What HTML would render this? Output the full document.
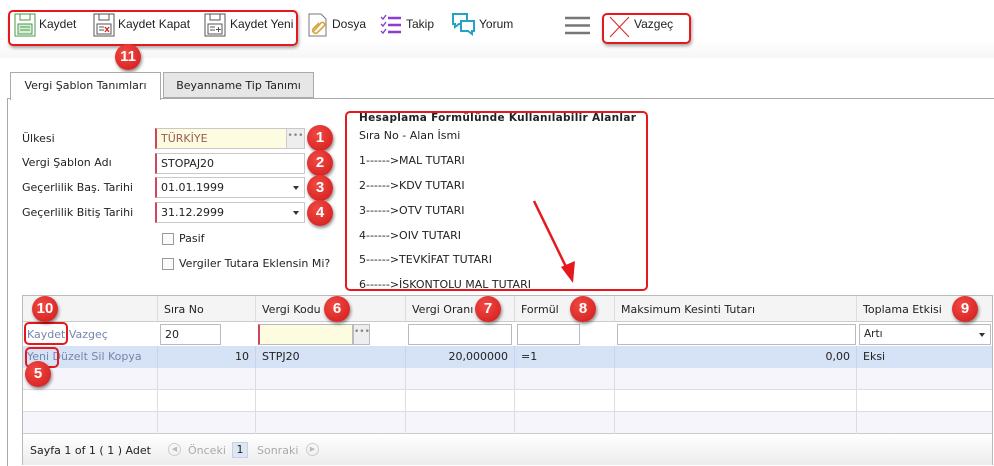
<!DOCTYPE html>
<html><head><meta charset="utf-8">
<style>
*{box-sizing:border-box;margin:0;padding:0}
body{width:994px;height:466px;overflow:hidden;background:#fff;position:relative;font-family:"DejaVu Sans","Liberation Sans",sans-serif;font-size:11px;color:#222}
.a{position:absolute}
.tb{font-family:"Liberation Sans",sans-serif;font-size:12px;color:#222;top:17px;white-space:nowrap}
.rb{position:absolute;border:2px solid #e5191d;border-radius:5px;box-shadow:1px 2px 3px rgba(0,0,0,.35)}
.bd{position:absolute;width:26px;height:26px;border-radius:50%;background:radial-gradient(circle at 40% 35%,#f04a43,#d1191a);color:#fff;font-family:"Liberation Sans",sans-serif;font-size:15px;font-weight:bold;text-align:center;line-height:26px;box-shadow:1px 2px 3px rgba(0,0,0,.45)}
.lbl{position:absolute;left:22px;font-size:11px}
.inp{position:absolute;left:155px;width:150px;height:21px;border:1px solid #c8c8c8;border-left:2px solid #d0455a;background:#fff;padding-left:4px;line-height:19px;font-size:11px}
.dd{position:absolute;right:5px;top:8px;border:3.5px solid transparent;border-top:4px solid #333}
.cb{position:absolute;left:162px;width:12px;height:12px;border:1px solid #999;background:#fafafa}
.fl{position:absolute;left:359px;font-size:11px;white-space:nowrap}
.g{position:absolute;left:22px;top:295px;width:971px;height:170px;border:1px solid #bbb}
.row{position:absolute;left:0;width:969px}
.c{position:absolute;top:0;bottom:0;border-right:1px solid #ddd}
.gi{position:absolute;height:21px;border:1px solid #bbb;background:#fff;padding-left:4px;line-height:19px}
.lk{color:#7585ac}
</style></head><body>
<div class="a" style="left:0;top:0;width:994px;height:58px;background:linear-gradient(#fff 70%,#f6f6f6)"></div>
<div class="rb" style="left:8px;top:10px;width:290px;height:36px"></div>
<svg class="a" style="left:14px;top:13px" width="22" height="24" viewBox="0 0 22 24"><rect x="1" y="1" width="20" height="22" fill="#fff" stroke="#4a9a4a"/><rect x="6" y="1" width="10" height="6" fill="#fff" stroke="#4a9a4a"/><rect x="4" y="11" width="14" height="10" fill="#d9efd9" stroke="#4a9a4a"/><path d="M6 14h10M6 17h10" stroke="#4a9a4a"/></svg>
<div class="a tb" style="left:39px">Kaydet</div>
<svg class="a" style="left:93px;top:13px" width="22" height="24" viewBox="0 0 22 24"><rect x="1" y="1" width="20" height="22" fill="#fff" stroke="#555"/><rect x="6" y="1" width="10" height="6" fill="#fff" stroke="#555"/><rect x="4" y="11" width="14" height="10" fill="#fff" stroke="#555"/><path d="M6 14h5M6 17h5" stroke="#555"/><path d="M12 14l4 5M16 14l-4 5" stroke="#d22" stroke-width="1.3"/></svg>
<div class="a tb" style="left:118px">Kaydet Kapat</div>
<svg class="a" style="left:204px;top:13px" width="22" height="24" viewBox="0 0 22 24"><rect x="1" y="1" width="20" height="22" fill="#fff" stroke="#555"/><rect x="6" y="1" width="10" height="6" fill="#fff" stroke="#555"/><rect x="4" y="11" width="14" height="10" fill="#fff" stroke="#555"/><path d="M6 14h5M6 17h5M12 16.5h5M14.5 14v5" stroke="#555"/></svg>
<div class="a tb" style="left:230px">Kaydet Yeni</div>
<svg class="a" style="left:308px;top:13px" width="20" height="24" viewBox="0 0 20 24"><path d="M1 1h12l5 5v17H1z" fill="#fff" stroke="#777"/><path d="M5 19l8-9a2 2 0 0 1 3 3l-7 7a3 3 0 0 1-4-4l6-6" fill="none" stroke="#d8a53a" stroke-width="1.6"/></svg>
<div class="a tb" style="left:332px">Dosya</div>
<svg class="a" style="left:380px;top:13px" width="22" height="22" viewBox="0 0 22 22"><path d="M1 4l2 2 3-4M1 11l2 2 3-4M1 18l2 2 3-4" stroke="#8a3fd1" stroke-width="1.4" fill="none"/><path d="M8 5h13M8 12h13M8 19h13" stroke="#8a3fd1" stroke-width="2.5"/></svg>
<div class="a tb" style="left:406px">Takip</div>
<svg class="a" style="left:451px;top:12px" width="25" height="24" viewBox="0 0 25 24"><path d="M2 2h14v10H8l-4 3v-3H2z" fill="#fff" stroke="#26a3c4" stroke-width="2"/><path d="M10 9h13v10h-2v3l-4-3h-7z" fill="#fff" stroke="#26a3c4" stroke-width="2"/></svg>
<div class="a tb" style="left:479px">Yorum</div>
<svg class="a" style="left:565px;top:16px" width="25" height="19"><path d="M0 2h25M0 9.5h25M0 17h25" stroke="#777" stroke-width="2.6"/></svg>
<div class="rb" style="left:602px;top:13px;width:89px;height:31px"></div>
<svg class="a" style="left:609px;top:16px" width="21" height="22"><path d="M1 1l19 20M20 1L1 21" stroke="#e23333" stroke-width="1.2"/></svg>
<div class="a tb" style="left:634px">Vazgeç</div>
<div class="bd" style="left:115px;top:44px">11</div>
<div class="a" style="left:7px;top:98px;width:987px;height:368px;border-left:1px solid #aaa;border-top:1px solid #aaa"></div>
<div class="a" style="left:10px;top:72px;width:151px;height:28px;background:#fff;border:1px solid #aaa;border-bottom:none;text-align:center;line-height:26px">Vergi Şablon Tanımları</div>
<div class="a" style="left:163px;top:72px;width:151px;height:26px;background:#e6e6e6;border:1px solid #aaa;text-align:center;line-height:25px">Beyanname Tip Tanımı</div>
<div class="lbl" style="top:132px">Ülkesi</div>
<div class="lbl" style="top:156px">Vergi Şablon Adı</div>
<div class="lbl" style="top:181px">Geçerlilik Baş. Tarihi</div>
<div class="lbl" style="top:206px">Geçerlilik Bitiş Tarihi</div>
<div class="inp" style="top:128px;background:#fdfbe0;color:#9a5a5a">TÜRKİYE<div class="a" style="right:0;top:0;width:18px;height:19px;background:#eee;border-left:1px solid #ccc;color:#888;font-size:9px;text-align:center;line-height:15px">•••</div></div>
<div class="inp" style="top:153px">STOPAJ20</div>
<div class="inp" style="top:177px">01.01.1999<div class="dd"></div></div>
<div class="inp" style="top:202px">31.12.2999<div class="dd"></div></div>
<div class="cb" style="top:233px"></div><div class="a" style="left:179px;top:232px">Pasif</div>
<div class="cb" style="top:258px"></div><div class="a" style="left:179px;top:257px">Vergiler Tutara Eklensin Mi?</div>
<div class="bd" style="left:307px;top:125px">1</div>
<div class="bd" style="left:307px;top:150px">2</div>
<div class="bd" style="left:307px;top:175px">3</div>
<div class="bd" style="left:307px;top:200px">4</div>
<div class="a" style="left:345px;top:111px;width:303px;height:180px;overflow:hidden">
<div class="fl" style="left:14px;top:1px;font-weight:bold;font-size:10.5px;letter-spacing:0.3px">Hesaplama Formülünde Kullanılabilir Alanlar</div>
<div class="fl" style="left:14px;top:18px">Sıra No - Alan İsmi</div>
<div class="fl" style="left:14px;top:43px">1------&gt;MAL TUTARI</div>
<div class="fl" style="left:14px;top:68px">2------&gt;KDV TUTARI</div>
<div class="fl" style="left:14px;top:93px">3------&gt;OTV TUTARI</div>
<div class="fl" style="left:14px;top:118px">4------&gt;OIV TUTARI</div>
<div class="fl" style="left:14px;top:142px">5------&gt;TEVKİFAT TUTARI</div>
<div class="fl" style="left:14px;top:167px">6------&gt;İSKONTOLU MAL TUTARI</div>
</div>
<div class="rb" style="left:345px;top:111px;width:303px;height:180px;box-shadow:none"></div>
<svg class="a" style="left:525px;top:195px" width="55" height="95"><path d="M9 6L44 78" stroke="#e5191d" stroke-width="2.5"/><path d="M36 72L48 88 50 66z" fill="#e5191d"/></svg>
<div class="g">
<div class="row" style="top:0;height:26px;background:#f4f4f4;border-bottom:1px solid #ccc">
<div class="c" style="left:0;width:135px"></div>
<div class="c" style="left:135px;width:98px"><span class="a" style="left:6px;top:7px">Sıra No</span></div>
<div class="c" style="left:233px;width:150px"><span class="a" style="left:6px;top:7px">Vergi Kodu</span></div>
<div class="c" style="left:383px;width:109px"><span class="a" style="left:6px;top:7px">Vergi Oranı</span></div>
<div class="c" style="left:492px;width:100px"><span class="a" style="left:6px;top:7px">Formül</span></div>
<div class="c" style="left:592px;width:242px"><span class="a" style="left:6px;top:7px">Maksimum Kesinti Tutarı</span></div>
<div class="c" style="left:834px;width:135px;border:none"><span class="a" style="left:6px;top:7px">Toplama Etkisi</span></div>
</div>
<div class="row" style="top:26px;height:24px;background:#fff">
<span class="a lk" style="left:4px;top:6px">Kaydet Vazgeç</span>
<div class="gi" style="left:137px;top:2px;width:61px">20</div>
<div class="gi" style="left:235px;top:2px;width:95px;background:#fdfbe0;border-left:2px solid #d0455a"></div>
<div class="gi" style="left:330px;top:2px;width:17px;background:#eee;color:#888;font-size:9px;text-align:center;padding:0;line-height:15px">•••</div>
<div class="gi" style="left:385px;top:2px;width:104px"></div>
<div class="gi" style="left:494px;top:2px;width:63px"></div>
<div class="gi" style="left:594px;top:2px;width:239px"></div>
<div class="gi" style="left:836px;top:2px;width:132px;font-size:10.5px">Artı<div class="dd"></div></div>
</div>
<div class="row" style="top:50px;height:22px;background:#d6e2f5">
<div class="c" style="left:0;width:135px;border-color:#c8d4e8"><span class="a lk" style="left:4px;top:4px">Yeni Düzelt Sil Kopya</span></div>
<div class="c" style="left:135px;width:98px;border-color:#c8d4e8"><span class="a" style="right:6px;top:4px">10</span></div>
<div class="c" style="left:233px;width:150px;border-color:#c8d4e8"><span class="a" style="left:6px;top:4px">STPJ20</span></div>
<div class="c" style="left:383px;width:109px;border-color:#c8d4e8"><span class="a" style="right:6px;top:4px">20,000000</span></div>
<div class="c" style="left:492px;width:100px;border-color:#c8d4e8"><span class="a" style="left:6px;top:4px">=1</span></div>
<div class="c" style="left:592px;width:242px;border-color:#c8d4e8"><span class="a" style="right:6px;top:4px">0,00</span></div>
<div class="c" style="left:834px;width:135px;border:none"><span class="a" style="left:6px;top:4px">Eksi</span></div>
</div>
<div class="row" style="top:72px;height:22px;background:#f5f5fb;border-bottom:1px solid #ddd"></div>
<div class="row" style="top:94px;height:22px;background:#fff;border-bottom:1px solid #ddd"></div>
<div class="row" style="top:116px;height:22px;background:#f5f5fb;border-bottom:1px solid #ccc"></div>
<div class="row" style="top:72px;height:66px">
<div class="c" style="left:0;width:135px"></div><div class="c" style="left:135px;width:98px"></div><div class="c" style="left:233px;width:150px"></div><div class="c" style="left:383px;width:109px"></div><div class="c" style="left:492px;width:100px"></div><div class="c" style="left:592px;width:242px"></div>
</div>
<div class="row" style="top:138px;height:31px;background:linear-gradient(#fff,#ececec)">
<span class="a" style="left:7px;top:10px">Sayfa 1 of 1 ( 1 ) Adet</span>
<span class="a" style="left:145px;top:9px;width:13px;height:13px;border:1px solid #ccc;border-radius:50%;color:#bbb;font-size:7px;text-align:center;line-height:11px">◀</span>
<span class="a" style="left:165px;top:10px;color:#aaa">Önceki</span>
<span class="a" style="left:209px;top:8px;width:16px;height:16px;background:#dde6f3;border:1px solid #c5d2e5;text-align:center;line-height:14px">1</span>
<span class="a" style="left:234px;top:10px;color:#aaa">Sonraki</span>
<span class="a" style="left:283px;top:9px;width:13px;height:13px;border:1px solid #ccc;border-radius:50%;color:#bbb;font-size:7px;text-align:center;line-height:11px">▶</span>
</div>
</div>
<div class="rb" style="left:24px;top:322px;width:44px;height:23px;box-shadow:none"></div>
<div class="rb" style="left:25px;top:347px;width:34px;height:21px;box-shadow:none"></div>
<div class="bd" style="left:32px;top:296px">10</div>
<div class="bd" style="left:324px;top:296px">6</div>
<div class="bd" style="left:475px;top:296px">7</div>
<div class="bd" style="left:570px;top:296px">8</div>
<div class="bd" style="left:952px;top:296px">9</div>
<div class="bd" style="left:25px;top:361px">5</div>
</body></html>
